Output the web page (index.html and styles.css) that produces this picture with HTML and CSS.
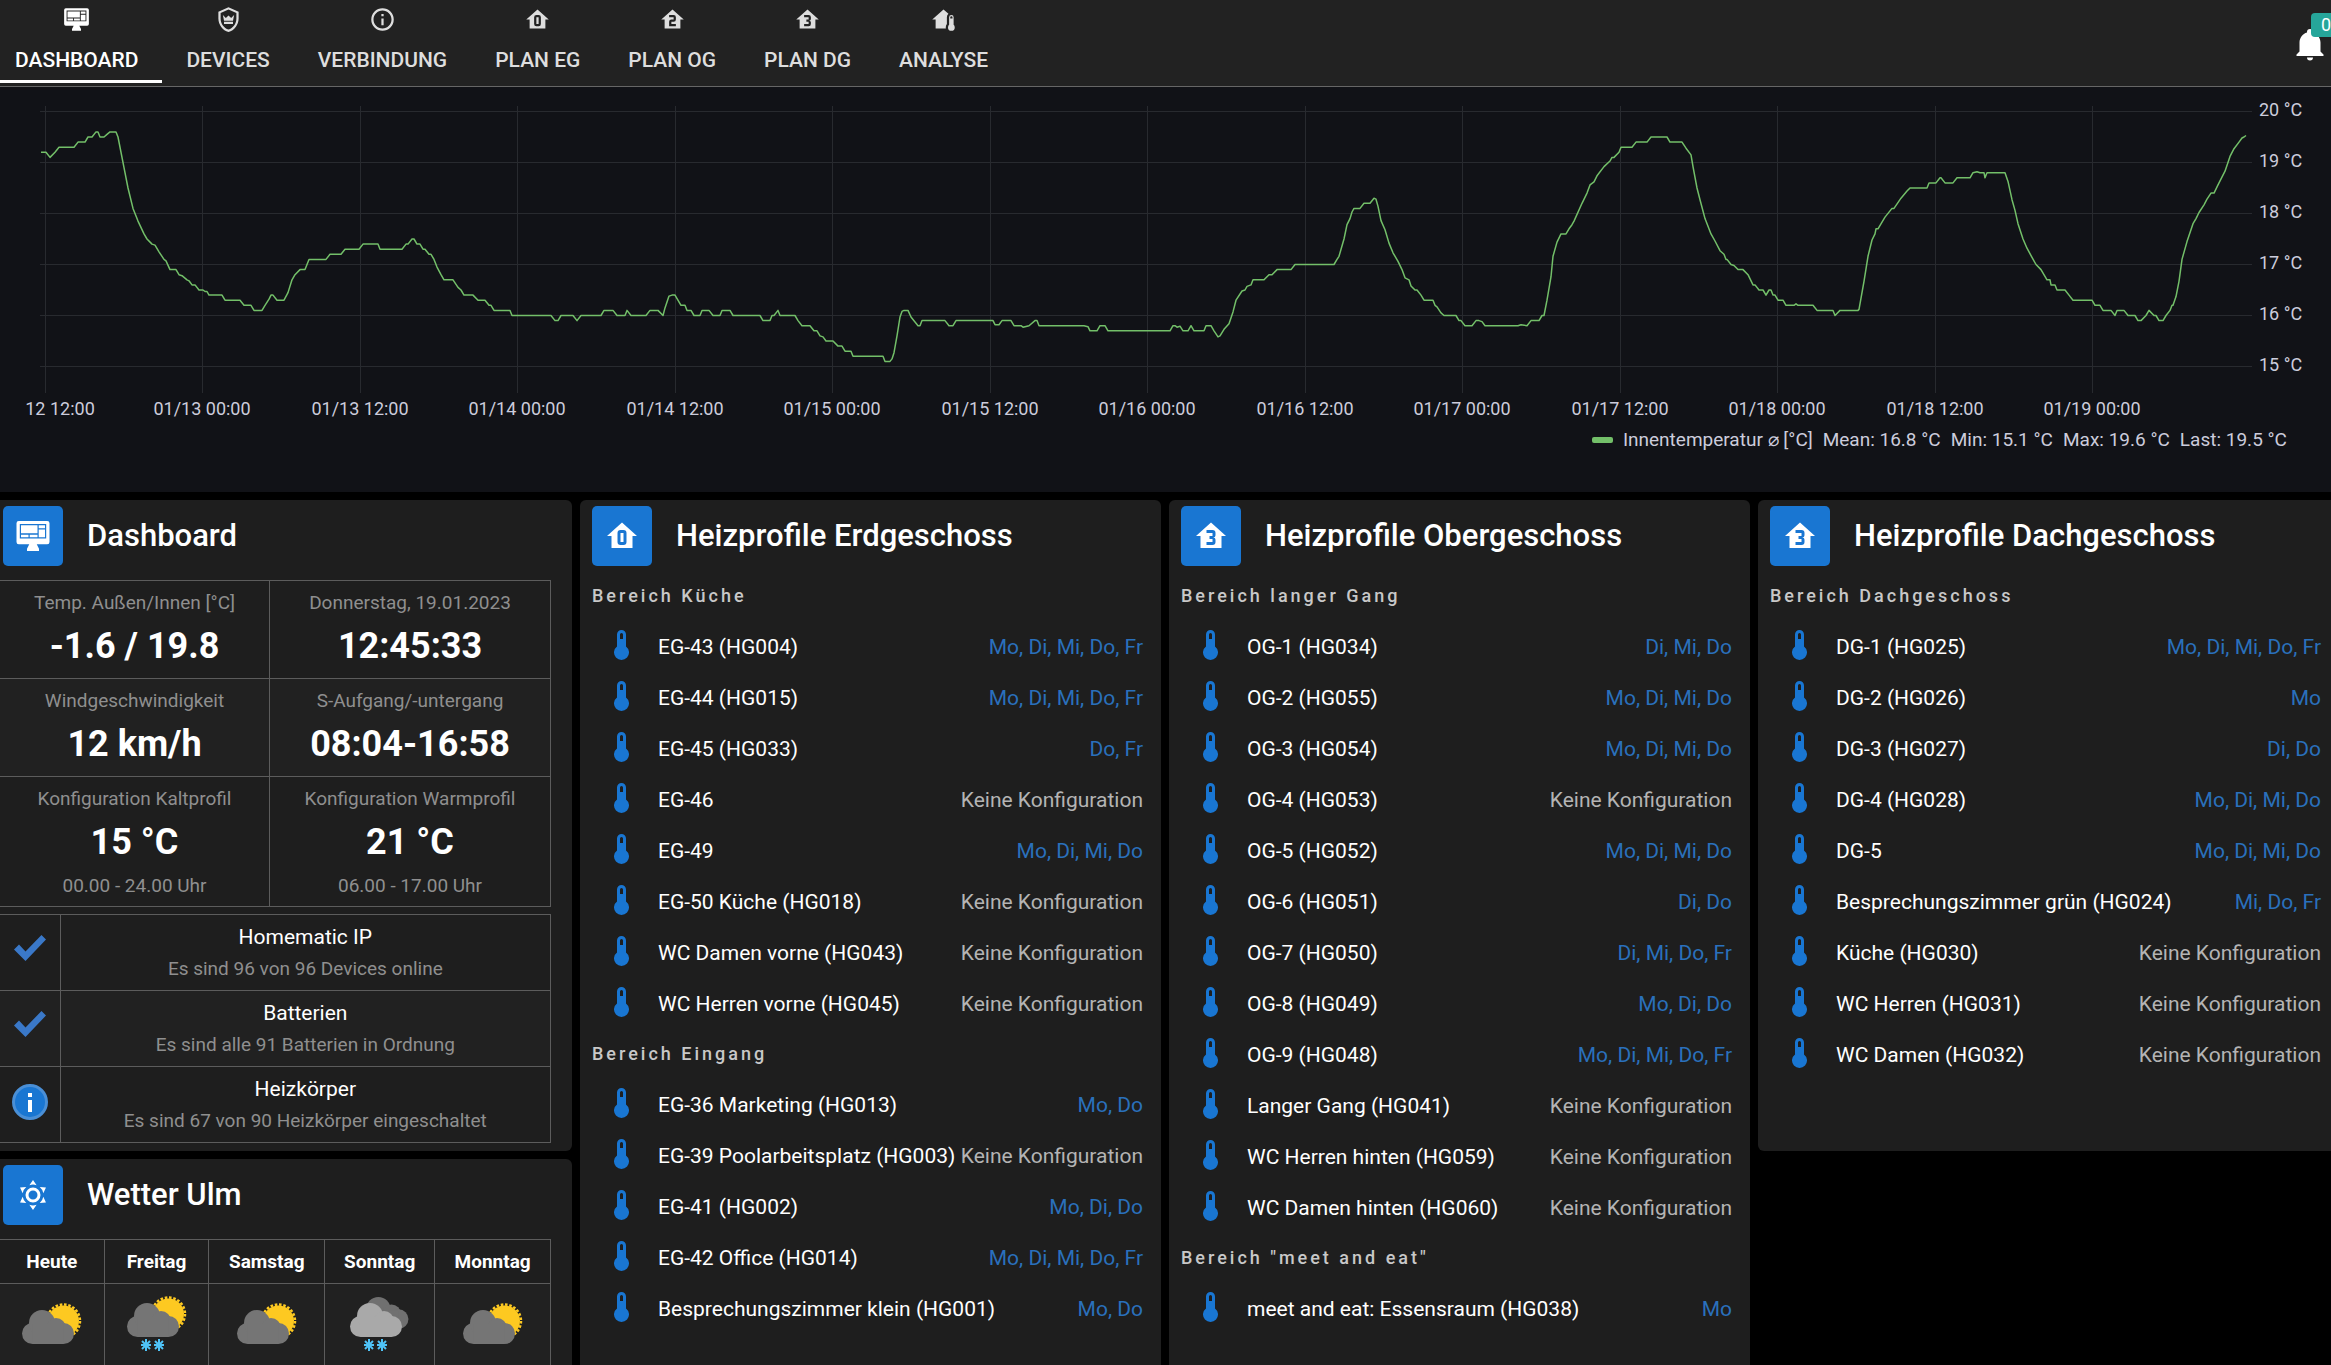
FILE: index.html
```html
<!DOCTYPE html>
<html lang="de">
<head>
    <meta charset="UTF-8">
    <meta name="viewport" content="width=device-width, initial-scale=1.0">
    <title>Dashboard</title>
    <link rel="stylesheet" href="styles.css">
</head>
<body>
    <!-- Icon sprite -->
    <svg class="sprite" aria-hidden="true">
        <symbol id="monitor" viewBox="0 0 24 24">
            <path fill-rule="evenodd" d="M2.5 2h19A1.5 1.5 0 0 1 23 3.500v12.500a1.500 1.500 0 0 1-1.500 1.500h-7L16 20.500V22H8v-1.500L9.500 17.500h-7A1.500 1.500 0 0 1 1 16V3.500A1.500 1.500 0 0 1 2.500 2zM3.200 4v9.600h17.600V4z"/>
            <path d="M4 4.800h11v5.400H4zM15.800 4.800H20v2h-4.200zM15.800 7.700H20v5.200h-4.200zM4 11.100h5v1.800H4zM9.800 11.100H15v1.800H9.800z"/>
        </symbol>
        <symbol id="shield" viewBox="0 0 24 24">
            <path d="M12 1L3 5v6c0 5.500 3.800 10.700 9 12 5.200-1.300 9-6.500 9-12V5l-9-4m7 10c0 4.500-3 8.700-7 9.900-4-1.200-7-5.400-7-9.900V6.300l7-3.100 7 3.100V11m-3 3v2H8v-2h8m1-6l-1 5H8L7 8l2.670 2.670L12 8.340l2.330 2.330L17 8z"/>
        </symbol>
        <symbol id="info" viewBox="0 0 24 24">
            <path d="M11 9h2V7h-2m1 13c-4.410 0-8-3.590-8-8s3.590-8 8-8 8 3.590 8 8-3.590 8-8 8m0-18A10 10 0 0 0 2 12a10 10 0 0 0 10 10 10 10 0 0 0 10-10A10 10 0 0 0 12 2m-1 15h2v-6h-2v6z"/>
        </symbol>
        <symbol id="floor-0" viewBox="0 0 24 24">
            <path d="M11 10h2v6h-2v-6m11 2h-3v8H5v-8H2l10-9 10 9m-7-2a2 2 0 0 0-2-2h-2a2 2 0 0 0-2 2v6a2 2 0 0 0 2 2h2a2 2 0 0 0 2-2v-6z"/>
        </symbol>
        <symbol id="floor-2" viewBox="0 0 24 24">
            <path fill-rule="evenodd" d="M12 3L2 12h3v8h14v-8h3L12 3m3 7v2a2 2 0 0 1-2 2h-2v2h4v2H9v-4a2 2 0 0 1 2-2h2v-2H9V8h4a2 2 0 0 1 2 2z"/>
        </symbol>
        <symbol id="floor-3" viewBox="0 0 24 24">
            <path fill-rule="evenodd" d="M12 3L2 12h3v8h14v-8h3L12 3m3 8.500a1.500 1.500 0 0 1-1.500 1.500 1.500 1.500 0 0 1 1.500 1.500V16a2 2 0 0 1-2 2H9v-2h4v-2h-2v-2h2v-2H9V8h4a2 2 0 0 1 2 2v1.500z"/>
        </symbol>
        <symbol id="home-temp" viewBox="0 0 24 24">
            <path d="M19 8a2 2 0 0 1 2 2v6.760c.61.55 1 1.350 1 2.240a3 3 0 0 1-6 0c0-.89.39-1.690 1-2.240V10a2 2 0 0 1 2-2m0 1a1 1 0 0 0-1 1v1h2v-1a1 1 0 0 0-1-1M5 20v-8H2l10-9 4.400 3.960A4 4 0 0 0 15 10v6a5 5 0 0 0-1 3l.1 1H5z"/>
        </symbol>
        <symbol id="sunny" viewBox="0 0 24 24">
            <path d="M12 7a5 5 0 1 1 0 10 5 5 0 0 1 0-10m0 2a3 3 0 1 0 0 6 3 3 0 0 0 0-6m0-7l2.390 3.420a7 7 0 0 0-4.780 0L12 2M3.340 7l4.160-.35a7 7 0 0 0-2.390 4.140L3.340 7m.02 10l1.760-3.770a7 7 0 0 0 2.380 4.140L3.360 17M20.650 7l-1.770 3.790a7 7 0 0 0-2.380-4.150l4.150.36m-.01 10l-4.140.36a7 7 0 0 0 2.370-4.150L20.640 17M12 22l-2.410-3.440a7 7 0 0 0 4.780 0L12 22z"/>
        </symbol>
        <symbol id="bell" viewBox="0 0 24 24">
            <path d="M21 19v1H3v-1l2-2v-6c0-3.100 2.030-5.830 5-6.710V4a2 2 0 0 1 4 0v.29c2.970.88 5 3.610 5 6.710v6l2 2m-7 2a2 2 0 0 1-4 0"/>
        </symbol>
        <symbol id="thermo" viewBox="0 0 15 30">
            <path fill-rule="evenodd" d="M3 4.500a4.500 4.500 0 0 1 9 0v12a7.500 7.500 0 1 1-9 0zM6 4.500v4.500h3V4.500a1.500 1.500 0 0 0-3 0z"/>
        </symbol>
        <symbol id="check" viewBox="0 0 34 28">
            <path d="M1 15.500l5-5 6.500 7L28.500 1 33 5.500 12.500 27z"/>
        </symbol>
        <symbol id="cloud" viewBox="0 0 52 34">
            <circle cx="10.500" cy="23.500" r="10.500"/>
            <circle cx="20" cy="13" r="13"/>
            <circle cx="34" cy="18" r="10"/>
            <circle cx="41.500" cy="23.500" r="10.500"/>
            <path d="M10.500 14h31v20h-31z"/>
        </symbol>
        <symbol id="flake" viewBox="0 0 12 12">
            <path fill="none" stroke="#4fc3f7" stroke-width="2" d="M6 0v12M1 6h10M2 2l8 8M10 2l-8 8"/>
        </symbol>
        <symbol id="sun-cloud" viewBox="0 0 60 50">
            <circle cx="41.500" cy="18" r="15.500" fill="#fdc921"/>
            <circle cx="41.500" cy="18" r="16.500" fill="none" stroke="#fdc921" stroke-width="2.500" stroke-dasharray="2.600 1.720"/>
            <use href="#cloud" y="7" width="52" height="34" fill="#757575"/>
        </symbol>
    </svg>

    <div class="page">
        <header class="topbar">
            <nav class="tabs">
                <a class="tab active" href="#dashboard"><svg><use href="#monitor"/></svg>DASHBOARD</a>
                <a class="tab" href="#devices"><svg><use href="#shield"/></svg>DEVICES</a>
                <a class="tab" href="#verbindung"><svg><use href="#info"/></svg>VERBINDUNG</a>
                <a class="tab" href="#plan-eg"><svg><use href="#floor-0"/></svg>PLAN EG</a>
                <a class="tab" href="#plan-og"><svg><use href="#floor-2"/></svg>PLAN OG</a>
                <a class="tab" href="#plan-dg"><svg><use href="#floor-3"/></svg>PLAN DG</a>
                <a class="tab" href="#analyse"><svg><use href="#home-temp"/></svg>ANALYSE</a>
            </nav>
            <button class="bell" type="button" aria-label="Benachrichtigungen">
                <svg><use href="#bell"/></svg>
                <span class="badge">0</span>
            </button>
        </header>

        <section class="chart-panel">
            <svg class="chart" viewBox="0 0 2331 340" role="img" aria-label="Innentemperatur">
                <path class="grid-line" d="M40 24.500H2252M40 75.500H2252M40 126.500H2252M40 177.500H2252M40 228.500H2252M40 279.500H2252"/>
                <path class="grid-line" d="M45.500 19V306M202.500 19V306M360.500 19V306M517.500 19V306M675.500 19V306M832.500 19V306M990.500 19V306M1147.500 19V306M1305.500 19V306M1462.500 19V306M1620.500 19V306M1777.500 19V306M1935.500 19V306M2092.500 19V306"/>
                <polyline id="series" class="series"/>
                <g class="y-axis">
                    <text x="2259" y="29">20 °C</text>
                    <text x="2259" y="80">19 °C</text>
                    <text x="2259" y="131">18 °C</text>
                    <text x="2259" y="182">17 °C</text>
                    <text x="2259" y="233">16 °C</text>
                    <text x="2259" y="284">15 °C</text>
                </g>
                <g class="x-axis">
                    <text x="60" y="328">12 12:00</text>
                    <text x="202" y="328">01/13 00:00</text>
                    <text x="360" y="328">01/13 12:00</text>
                    <text x="517" y="328">01/14 00:00</text>
                    <text x="675" y="328">01/14 12:00</text>
                    <text x="832" y="328">01/15 00:00</text>
                    <text x="990" y="328">01/15 12:00</text>
                    <text x="1147" y="328">01/16 00:00</text>
                    <text x="1305" y="328">01/16 12:00</text>
                    <text x="1462" y="328">01/17 00:00</text>
                    <text x="1620" y="328">01/17 12:00</text>
                    <text x="1777" y="328">01/18 00:00</text>
                    <text x="1935" y="328">01/18 12:00</text>
                    <text x="2092" y="328">01/19 00:00</text>
                </g>
            </svg>
            <div class="legend">
                <span class="swatch"></span>
                <span>Innentemperatur ⌀ [°C]</span>
                <span>Mean: 16.8 °C</span>
                <span>Min: 15.1 °C</span>
                <span>Max: 19.6 °C</span>
                <span>Last: 19.5 °C</span>
            </div>
        </section>

        <main class="cards">
            <section class="card info-card">
                <h2 class="card-title"><span class="card-icon"><svg><use href="#monitor"/></svg></span>Dashboard</h2>
                <table class="stats">
                    <colgroup><col class="w49"><col class="w51"></colgroup>
                    <tr>
                        <td><div class="label">Temp. Außen/Innen [°C]</div><div class="value">-1.6 / 19.8</div></td>
                        <td><div class="label">Donnerstag, 19.01.2023</div><div class="value">12:45:33</div></td>
                    </tr>
                    <tr>
                        <td><div class="label">Windgeschwindigkeit</div><div class="value">12 km/h</div></td>
                        <td><div class="label">S-Aufgang/-untergang</div><div class="value">08:04-16:58</div></td>
                    </tr>
                    <tr>
                        <td><div class="label">Konfiguration Kaltprofil</div><div class="value">15 °C</div><div class="note">00.00 - 24.00 Uhr</div></td>
                        <td><div class="label">Konfiguration Warmprofil</div><div class="value">21 °C</div><div class="note">06.00 - 17.00 Uhr</div></td>
                    </tr>
                </table>
                <table class="status">
                    <colgroup><col class="w11"><col></colgroup>
                    <tr>
                        <td><svg class="check"><use href="#check"/></svg></td>
                        <td><div class="name">Homematic IP</div><div class="note">Es sind 96 von 96 Devices online</div></td>
                    </tr>
                    <tr>
                        <td><svg class="check"><use href="#check"/></svg></td>
                        <td><div class="name">Batterien</div><div class="note">Es sind alle 91 Batterien in Ordnung</div></td>
                    </tr>
                    <tr>
                        <td>
                            <svg class="info-dot" viewBox="0 0 36 36">
                                <circle cx="18" cy="18" r="16.500" fill="#1976d2" stroke="#4a8fd6" stroke-width="3"/>
                                <path fill="#fff" d="M16 9h4v4h-4zM16 16h4v12h-4z"/>
                            </svg>
                        </td>
                        <td><div class="name">Heizkörper</div><div class="note">Es sind 67 von 90 Heizkörper eingeschaltet</div></td>
                    </tr>
                </table>
            </section>

            <section class="card floor-card">
                <h2 class="card-title"><span class="card-icon"><svg><use href="#floor-0"/></svg></span>Heizprofile Erdgeschoss</h2>
                <h3>Bereich Küche</h3>
                <ul>
                    <li><svg><use href="#thermo"/></svg><span>EG-43 (HG004)</span><span class="days">Mo, Di, Mi, Do, Fr</span></li>
                    <li><svg><use href="#thermo"/></svg><span>EG-44 (HG015)</span><span class="days">Mo, Di, Mi, Do, Fr</span></li>
                    <li><svg><use href="#thermo"/></svg><span>EG-45 (HG033)</span><span class="days">Do, Fr</span></li>
                    <li><svg><use href="#thermo"/></svg><span>EG-46</span><span class="none">Keine Konfiguration</span></li>
                    <li><svg><use href="#thermo"/></svg><span>EG-49</span><span class="days">Mo, Di, Mi, Do</span></li>
                    <li><svg><use href="#thermo"/></svg><span>EG-50 Küche (HG018)</span><span class="none">Keine Konfiguration</span></li>
                    <li><svg><use href="#thermo"/></svg><span>WC Damen vorne (HG043)</span><span class="none">Keine Konfiguration</span></li>
                    <li><svg><use href="#thermo"/></svg><span>WC Herren vorne (HG045)</span><span class="none">Keine Konfiguration</span></li>
                </ul>
                <h3>Bereich Eingang</h3>
                <ul>
                    <li><svg><use href="#thermo"/></svg><span>EG-36 Marketing (HG013)</span><span class="days">Mo, Do</span></li>
                    <li><svg><use href="#thermo"/></svg><span>EG-39 Poolarbeitsplatz (HG003)</span><span class="none">Keine Konfiguration</span></li>
                    <li><svg><use href="#thermo"/></svg><span>EG-41 (HG002)</span><span class="days">Mo, Di, Do</span></li>
                    <li><svg><use href="#thermo"/></svg><span>EG-42 Office (HG014)</span><span class="days">Mo, Di, Mi, Do, Fr</span></li>
                    <li><svg><use href="#thermo"/></svg><span>Besprechungszimmer klein (HG001)</span><span class="days">Mo, Do</span></li>
                </ul>
            </section>

            <section class="card floor-card">
                <h2 class="card-title"><span class="card-icon"><svg><use href="#floor-3"/></svg></span>Heizprofile Obergeschoss</h2>
                <h3>Bereich langer Gang</h3>
                <ul>
                    <li><svg><use href="#thermo"/></svg><span>OG-1 (HG034)</span><span class="days">Di, Mi, Do</span></li>
                    <li><svg><use href="#thermo"/></svg><span>OG-2 (HG055)</span><span class="days">Mo, Di, Mi, Do</span></li>
                    <li><svg><use href="#thermo"/></svg><span>OG-3 (HG054)</span><span class="days">Mo, Di, Mi, Do</span></li>
                    <li><svg><use href="#thermo"/></svg><span>OG-4 (HG053)</span><span class="none">Keine Konfiguration</span></li>
                    <li><svg><use href="#thermo"/></svg><span>OG-5 (HG052)</span><span class="days">Mo, Di, Mi, Do</span></li>
                    <li><svg><use href="#thermo"/></svg><span>OG-6 (HG051)</span><span class="days">Di, Do</span></li>
                    <li><svg><use href="#thermo"/></svg><span>OG-7 (HG050)</span><span class="days">Di, Mi, Do, Fr</span></li>
                    <li><svg><use href="#thermo"/></svg><span>OG-8 (HG049)</span><span class="days">Mo, Di, Do</span></li>
                    <li><svg><use href="#thermo"/></svg><span>OG-9 (HG048)</span><span class="days">Mo, Di, Mi, Do, Fr</span></li>
                    <li><svg><use href="#thermo"/></svg><span>Langer Gang (HG041)</span><span class="none">Keine Konfiguration</span></li>
                    <li><svg><use href="#thermo"/></svg><span>WC Herren hinten (HG059)</span><span class="none">Keine Konfiguration</span></li>
                    <li><svg><use href="#thermo"/></svg><span>WC Damen hinten (HG060)</span><span class="none">Keine Konfiguration</span></li>
                </ul>
                <h3>Bereich "meet and eat"</h3>
                <ul>
                    <li><svg><use href="#thermo"/></svg><span>meet and eat: Essensraum (HG038)</span><span class="days">Mo</span></li>
                </ul>
            </section>

            <section class="card">
                <h2 class="card-title"><span class="card-icon"><svg><use href="#floor-3"/></svg></span>Heizprofile Dachgeschoss</h2>
                <h3>Bereich Dachgeschoss</h3>
                <ul>
                    <li><svg><use href="#thermo"/></svg><span>DG-1 (HG025)</span><span class="days">Mo, Di, Mi, Do, Fr</span></li>
                    <li><svg><use href="#thermo"/></svg><span>DG-2 (HG026)</span><span class="days">Mo</span></li>
                    <li><svg><use href="#thermo"/></svg><span>DG-3 (HG027)</span><span class="days">Di, Do</span></li>
                    <li><svg><use href="#thermo"/></svg><span>DG-4 (HG028)</span><span class="days">Mo, Di, Mi, Do</span></li>
                    <li><svg><use href="#thermo"/></svg><span>DG-5</span><span class="days">Mo, Di, Mi, Do</span></li>
                    <li><svg><use href="#thermo"/></svg><span>Besprechungszimmer grün (HG024)</span><span class="days">Mi, Do, Fr</span></li>
                    <li><svg><use href="#thermo"/></svg><span>Küche (HG030)</span><span class="none">Keine Konfiguration</span></li>
                    <li><svg><use href="#thermo"/></svg><span>WC Herren (HG031)</span><span class="none">Keine Konfiguration</span></li>
                    <li><svg><use href="#thermo"/></svg><span>WC Damen (HG032)</span><span class="none">Keine Konfiguration</span></li>
                </ul>
            </section>

            <section class="card info-card">
                <h2 class="card-title"><span class="card-icon"><svg><use href="#sunny"/></svg></span>Wetter Ulm</h2>
                <table class="weather">
                    <colgroup><col class="w19"><col class="w19"><col class="w21"><col class="w20"><col class="w21"></colgroup>
                    <tr><th>Heute</th><th>Freitag</th><th>Samstag</th><th>Sonntag</th><th>Monntag</th></tr>
                    <tr>
                        <td><svg viewBox="0 0 60 58"><use href="#sun-cloud" y="7" width="60" height="50"/></svg></td>
                        <td>
                            <svg viewBox="0 0 60 58">
                                <use href="#sun-cloud" width="60" height="50"/>
                                <use href="#flake" x="13" y="43" width="12" height="12"/>
                                <use href="#flake" x="26" y="43" width="12" height="12"/>
                            </svg>
                        </td>
                        <td><svg viewBox="0 0 60 58"><use href="#sun-cloud" y="7" width="60" height="50"/></svg></td>
                        <td>
                            <svg viewBox="0 0 60 58">
                                <use href="#cloud" x="9" y="1" width="50" height="32" fill="#707070"/>
                                <use href="#cloud" y="7" width="52" height="34" fill="#a9a9a9"/>
                                <use href="#flake" x="13" y="43" width="12" height="12"/>
                                <use href="#flake" x="26" y="43" width="12" height="12"/>
                            </svg>
                        </td>
                        <td><svg viewBox="0 0 60 58"><use href="#sun-cloud" y="7" width="60" height="50"/></svg></td>
                    </tr>
                </table>
            </section>
        </main>
    </div>

    <script src="chart.js"></script>
</body>
</html>
```

FILE: styles.css
```css
:root {
    --bar-bg: #222222;
    --card-bg: #1e1e1e;
    --row-alt: #212121;
    --chart-bg: #111217;
    --primary: #1976d2;
    --days: #2a70bb;
    --muted: #8f8f8f;
    --line: #5c5c5c;
    --green: #73bf69;
}

* {
    box-sizing: border-box;
}

body {
    margin: 0;
    height: 100vh;
    overflow: hidden;
    background-color: #000;
    color: #fff;
    font-family: Roboto, 'Open Sans', sans-serif;
    font-size: 21px;
}

svg {
    display: block;
    fill: currentColor;
}

.sprite {
    display: none;
}

/* the view is scrolled a little to the right */
.page {
    margin: 0 -8px 0 -9px;
}

/* Tabs */
.topbar {
    display: flex;
    justify-content: space-between;
    background-color: var(--bar-bg);
    border-bottom: 1px solid #666;
    padding-right: 9px;
}

.tabs {
    display: flex;
}

.tab {
    display: flex;
    flex-direction: column;
    align-items: center;
    height: 83px;
    margin-bottom: 3px;
    padding: 6px 24px 0;
    border-bottom: 3px solid transparent;
    color: #dedede;
    font-weight: 500;
    line-height: 32px;
    text-decoration: none;
}

.tab svg {
    width: 27px;
    height: 27px;
    margin-bottom: 11px;
}

.tab.active {
    color: #fff;
    border-bottom-color: #fff;
}

.bell {
    position: relative;
    align-self: flex-start;
    margin-top: 26px;
    padding: 0;
    border: none;
    background: none;
    color: #fff;
    font: inherit;
}

.bell svg {
    width: 36px;
    height: 36px;
    margin-right: 2px;
}

.badge {
    position: absolute;
    left: 19px;
    top: -13px;
    padding: 0 10px;
    border-radius: 4px;
    background-color: #26a69a;
    font-size: 18px;
    line-height: 24px;
}

/* Chart */
.chart-panel {
    padding: 0 8px 39px 9px;
    background-color: var(--chart-bg);
    color: #ccccdc;
    font-size: 18px;
}

.chart {
    width: 100%;
    height: auto;
}

.grid-line {
    fill: none;
    stroke: #282a2f;
}

.series {
    fill: none;
    stroke: var(--green);
    stroke-width: 1.5;
    stroke-linejoin: round;
}

.x-axis {
    text-anchor: middle;
}

.legend {
    display: flex;
    justify-content: flex-end;
    align-items: center;
    gap: 10px;
    padding-right: 44px;
    font-size: 19px;
    line-height: 26px;
}

.swatch {
    width: 21px;
    height: 6px;
    border-radius: 2px;
    background-color: var(--green);
}

/* Cards */
.cards {
    display: grid;
    grid-template-columns: repeat(4, minmax(0, 1fr));
    grid-template-rows: auto 1fr;
    gap: 8px;
    padding-top: 8px;
}

.card {
    padding: 6px 18px 8px 12px;
    border-radius: 6px;
    background-color: var(--card-bg);
}

.floor-card {
    grid-row: span 2;
}

.card-title {
    display: flex;
    align-items: center;
    gap: 24px;
    margin: 0 0 5px;
    font-size: 31px;
    font-weight: 500;
    line-height: 60px;
}

.card-icon {
    display: grid;
    place-items: center;
    width: 60px;
    height: 60px;
    border-radius: 5px;
    background-color: var(--primary);
}

.card-icon svg {
    width: 36px;
    height: 36px;
}

h3 {
    margin: 0;
    padding: 10px 0 11px;
    color: #c8c8c8;
    font-size: 18px;
    font-weight: 500;
    line-height: 29px;
    letter-spacing: 3px;
}

ul {
    margin: 0;
    padding: 0;
    list-style: none;
}

li {
    display: flex;
    align-items: center;
    height: 51px;
    white-space: nowrap;
}

li svg {
    width: 15px;
    height: 30px;
    margin: 0 29px 4px 22px;
    color: var(--primary);
}

.days,
.none {
    margin-left: auto;
}

.days {
    color: var(--days);
}

.none {
    color: #b4b4b4;
}

/* Tables */
.info-card {
    padding-right: 21px;
}

table {
    width: calc(100% + 4px);
    margin: 14px 0 0 -4px;
    border-collapse: collapse;
    table-layout: fixed;
    text-align: center;
}

tr:nth-child(even) {
    background-color: var(--row-alt);
}

td,
th {
    padding: 0;
    border: 1px solid var(--line);
}

.stats td {
    padding: 7px 0 4px;
    vertical-align: top;
}

.label {
    color: var(--muted);
    font-size: 19px;
    line-height: 30px;
}

.value {
    font-size: 36px;
    font-weight: 700;
    line-height: 56px;
}

.note {
    color: var(--muted);
    font-size: 19px;
    line-height: 32px;
}

.status {
    margin-top: 7px;
}

.status td {
    padding: 6px 0 5px;
}

.name {
    line-height: 32px;
}

.check {
    width: 34px;
    height: 28px;
    margin: 0 auto 10px;
    color: #3a78c8;
}

.info-dot {
    width: 36px;
    height: 36px;
    margin: 0 auto 6px;
}

.weather th {
    font-size: 19px;
    line-height: 43px;
}

.weather td {
    padding: 12px 0 20px;
}

.weather svg {
    width: 60px;
    height: 58px;
    margin: 0 auto;
}

.w11 { width: 11%; }
.w19 { width: 19%; }
.w20 { width: 20%; }
.w21 { width: 21%; }
.w49 { width: 49%; }
.w51 { width: 51%; }
```

FILE: chart.js
```javascript
// [x position, temperature in °C]
const readings = [
    [41, 19.2], [46, 19.2], [50, 19.1], [55, 19.2], [59, 19.3], [74, 19.3], [78, 19.4], [85, 19.4], [88, 19.5], [92, 19.5],
    [96, 19.6], [98, 19.6], [100, 19.5], [104, 19.5], [107, 19.55], [110, 19.6], [116, 19.6], [118, 19.5], [124, 18.9], [128, 18.5],
    [133, 18.1], [138, 17.85], [144, 17.6], [147, 17.5], [152, 17.4], [155, 17.38], [159, 17.25], [164, 17.1], [166, 17.07], [170, 16.9],
    [176, 16.9], [179, 16.8], [182, 16.78], [187, 16.7], [189, 16.68], [192, 16.6], [195, 16.6], [199, 16.5], [203, 16.5], [205, 16.47],
    [207, 16.47], [209, 16.4], [222, 16.4], [225, 16.3], [240, 16.3], [244, 16.2], [251, 16.2], [254, 16.1], [262, 16.1], [265, 16.2],
    [269, 16.32], [271, 16.4], [273, 16.4], [277, 16.3], [284, 16.3], [288, 16.45], [292, 16.7], [295, 16.8], [300, 16.9], [305, 16.9],
    [309, 17.1], [326, 17.1], [330, 17.2], [341, 17.2], [345, 17.3], [359, 17.3], [363, 17.4], [378, 17.4], [380, 17.3], [402, 17.3],
    [406, 17.4], [408, 17.4], [412, 17.5], [414, 17.5], [417, 17.4], [420, 17.4], [423, 17.3], [425, 17.3], [429, 17.2], [431, 17.2],
    [434, 17.1], [437, 16.95], [441, 16.8], [444, 16.7], [453, 16.7], [458, 16.55], [461, 16.5], [464, 16.4], [473, 16.4], [478, 16.3],
    [485, 16.3], [489, 16.2], [491, 16.2], [494, 16.1], [510, 16.1], [512, 16], [551, 16], [555, 15.9], [558, 15.9], [561, 16],
    [573, 16], [577, 15.9], [581, 16], [601, 16], [604, 16.1], [613, 16.1], [617, 16], [625, 16], [627, 16.1], [631, 16],
    [646, 16], [650, 16.1], [658, 16.1], [663, 16], [665, 16.15], [669, 16.38], [672, 16.4], [675, 16.4], [681, 16.2], [685, 16.2],
    [687, 16.1], [691, 16.1], [694, 16], [700, 16], [702, 16.1], [709, 16.1], [713, 16], [720, 16], [722, 16.1], [730, 16.1],
    [733, 16], [760, 16], [763, 15.9], [770, 15.9], [772, 16], [774, 16], [778, 16.1], [780, 16], [795, 16], [798, 15.9],
    [802, 15.8], [810, 15.8], [814, 15.7], [817, 15.7], [820, 15.6], [823, 15.58], [826, 15.5], [833, 15.5], [838, 15.4], [842, 15.4],
    [845, 15.3], [851, 15.3], [853, 15.2], [883, 15.2], [885, 15.1], [890, 15.1], [892, 15.15], [894, 15.27], [897, 15.6], [900, 15.97],
    [902, 16.08], [904, 16.1], [908, 16.1], [911, 15.97], [916, 15.85], [918, 15.8], [920, 15.8], [922, 15.9], [945, 15.9], [949, 15.8],
    [953, 15.8], [956, 15.9], [993, 15.9], [995, 15.82], [999, 15.82], [1002, 15.9], [1011, 15.9], [1014, 15.8], [1021, 15.8], [1023, 15.77],
    [1029, 15.8], [1035, 15.9], [1037, 15.9], [1039, 15.8], [1084, 15.8], [1088, 15.78], [1090, 15.7], [1097, 15.7], [1100, 15.8], [1105, 15.8],
    [1108, 15.7], [1170, 15.7], [1173, 15.8], [1175, 15.8], [1177, 15.77], [1180, 15.79], [1183, 15.7], [1188, 15.7], [1191, 15.8], [1194, 15.7],
    [1204, 15.7], [1206, 15.8], [1211, 15.8], [1214, 15.7], [1218, 15.58], [1220, 15.6], [1224, 15.73], [1229, 15.84], [1233, 16.07], [1236, 16.3],
    [1242, 16.48], [1245, 16.5], [1247, 16.57], [1251, 16.6], [1253, 16.7], [1264, 16.7], [1269, 16.8], [1272, 16.8], [1277, 16.9], [1291, 16.9],
    [1295, 17], [1334, 17], [1337, 17.1], [1339, 17.16], [1344, 17.5], [1347, 17.78], [1350, 17.9], [1352, 18.03], [1354, 18.1], [1360, 18.1],
    [1364, 18.2], [1370, 18.2], [1374, 18.3], [1376, 18.28], [1378, 18.14], [1381, 17.86], [1385, 17.68], [1389, 17.42], [1393, 17.23], [1398, 17.06],
    [1402, 16.9], [1405, 16.74], [1409, 16.7], [1411, 16.58], [1415, 16.5], [1417, 16.5], [1421, 16.4], [1424, 16.3], [1433, 16.3], [1435, 16.2],
    [1437, 16.17], [1441, 16.05], [1444, 16], [1456, 16], [1459, 15.9], [1461, 15.9], [1465, 15.8], [1472, 15.8], [1476, 15.9], [1479, 15.9],
    [1482, 15.88], [1485, 15.8], [1518, 15.8], [1521, 15.82], [1527, 15.8], [1531, 15.9], [1539, 15.9], [1542, 16], [1544, 16], [1547, 16.3],
    [1551, 16.76], [1553, 17.16], [1557, 17.44], [1561, 17.6], [1566, 17.6], [1569, 17.7], [1572, 17.78], [1574, 17.85], [1582, 18.2], [1587, 18.4],
    [1590, 18.56], [1594, 18.62], [1597, 18.74], [1604, 18.92], [1610, 19.03], [1612, 19.1], [1614, 19.1], [1619, 19.2], [1621, 19.3], [1632, 19.3],
    [1636, 19.4], [1647, 19.4], [1651, 19.5], [1667, 19.5], [1670, 19.4], [1682, 19.4], [1686, 19.28], [1691, 19.15], [1693, 18.92], [1697, 18.5],
    [1700, 18.27], [1705, 17.9], [1711, 17.6], [1715, 17.46], [1720, 17.27], [1724, 17.2], [1726, 17.1], [1727, 17.1], [1731, 17], [1734, 16.98],
    [1738, 16.9], [1743, 16.9], [1748, 16.8], [1753, 16.6], [1755, 16.6], [1759, 16.5], [1763, 16.5], [1766, 16.4], [1769, 16.5], [1771, 16.5],
    [1773, 16.4], [1775, 16.4], [1778, 16.3], [1783, 16.3], [1786, 16.2], [1794, 16.2], [1796, 16.23], [1798, 16.2], [1813, 16.2], [1817, 16.1],
    [1833, 16.1], [1835, 16], [1840, 16.1], [1858, 16.1], [1859, 16.12], [1864, 16.67], [1868, 17.16], [1872, 17.48], [1875, 17.6], [1876, 17.7],
    [1878, 17.7], [1882, 17.83], [1885, 17.93], [1892, 18.1], [1894, 18.1], [1901, 18.3], [1907, 18.44], [1910, 18.5], [1927, 18.5], [1929, 18.6],
    [1936, 18.6], [1940, 18.7], [1941, 18.7], [1945, 18.6], [1953, 18.6], [1957, 18.7], [1970, 18.7], [1973, 18.8], [1977, 18.82], [1980, 18.8],
    [1984, 18.8], [1985, 18.7], [1987, 18.8], [2005, 18.8], [2008, 18.63], [2012, 18.27], [2015, 18.06], [2018, 17.8], [2023, 17.5], [2027, 17.32],
    [2032, 17.14], [2036, 17], [2041, 16.9], [2047, 16.7], [2050, 16.7], [2051, 16.6], [2055, 16.6], [2057, 16.5], [2065, 16.5], [2069, 16.4],
    [2073, 16.3], [2092, 16.3], [2095, 16.2], [2100, 16.2], [2103, 16.1], [2111, 16.1], [2115, 16], [2117, 16.1], [2124, 16.1], [2128, 16],
    [2135, 16], [2138, 15.9], [2141, 15.9], [2146, 16], [2149, 16.1], [2154, 16], [2156, 16], [2159, 15.9], [2163, 15.9], [2166, 16],
    [2170, 16.1], [2172, 16.2], [2173, 16.2], [2176, 16.37], [2179, 16.67], [2182, 17.1], [2187, 17.45], [2193, 17.8], [2196, 17.9], [2199, 18.02],
    [2204, 18.17], [2207, 18.28], [2211, 18.4], [2214, 18.4], [2218, 18.56], [2225, 18.83], [2230, 19.12], [2234, 19.27], [2239, 19.4], [2242, 19.48],
    [2244, 19.5], [2246, 19.53]
];

const top20 = 24.5;
const pxPerDegree = 51;

function toPoint([x, temp]) {
    return `${x},${(top20 + (20 - temp) * pxPerDegree).toFixed(1)}`;
}

document.getElementById('series').setAttribute('points', readings.map(toPoint).join(' '));
```
